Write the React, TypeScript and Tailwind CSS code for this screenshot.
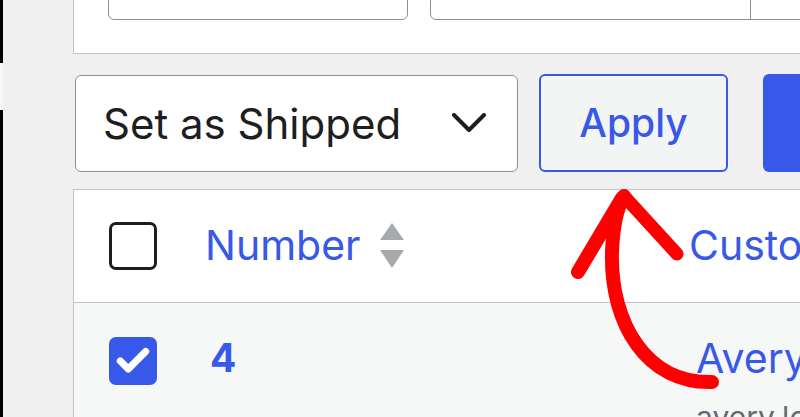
import { Check } from 'lucide-react'

function SortArrows() {
  return (
    <svg width="26" height="46" viewBox="0 0 26 46" className="shrink-0">
      <path d="M13 0 L25 17 L1 17 Z" fill="#a7aaad" />
      <path d="M1 27 L25 27 L13 45 Z" fill="#a7aaad" />
    </svg>
  )
}

function Arrow() {
  return (
    <svg
      className="absolute left-0 top-0 pointer-events-none"
      width="800"
      height="417"
      viewBox="0 0 800 417"
    >
      <g fill="none" stroke="#ff0000" strokeLinecap="round" strokeLinejoin="round">
        <path d="M712 382 C 648 384, 610 325, 612 252 C 613 225, 617 208, 624 196" strokeWidth="14" />
        <path d="M578 272 L 622 198" strokeWidth="14" />
        <path d="M624 196 L 677 254" strokeWidth="13" />
      </g>
    </svg>
  )
}

export default function App() {
  return (
    <div className="relative flex w-[800px] h-[417px] overflow-hidden bg-[#f0f0f1] font-['Inter',sans-serif]">
      <div className="flex flex-col w-[3px] shrink-0">
        <div className="h-[63px] shrink-0 bg-black" />
        <div className="h-[47px] shrink-0 bg-[#f6f7f7]" />
        <div className="flex-1 bg-black" />
      </div>

      <div className="flex flex-col flex-1 pl-[70px] min-w-0">
        {/* filters panel */}
        <div className="flex items-end gap-[22px] shrink-0 -mt-[50px] h-[104px] pl-[34px] pb-[33px] bg-white border-l border-b border-[#c3c4c7]">
          <div className="w-[300px] h-[60px] shrink-0 bg-white border border-[#8c8f94] rounded-[6px]" />
          <div className="flex w-[420px] h-[60px] shrink-0 bg-white border border-[#8c8f94] rounded-[6px]">
            <div className="w-[320px] border-r border-[#8c8f94]" />
          </div>
        </div>

        {/* bulk actions */}
        <div className="flex items-center shrink-0 mt-[20px] pl-[2px]">
          <div className="flex items-center justify-between w-[443px] h-[97px] shrink-0 pl-[27px] pr-[31px] bg-white border border-[#8c8f94] rounded-[6px] text-[42px] text-[#1e1e1e]">
            <span>Set as Shipped</span>
            <svg width="34" height="20" viewBox="0 0 34 20">
              <path d="M2 2 L17 17 L32 2" fill="none" stroke="#1e1e1e" strokeWidth="4" strokeLinecap="round" strokeLinejoin="round" />
            </svg>
          </div>
          <button className="ml-[21px] w-[189px] h-[98px] shrink-0 bg-[#f3f4f4] border-2 border-[#3858e9] rounded-[6px] text-[39px] font-medium text-[#3858e9]">
            Apply
          </button>
          <div className="ml-[35px] w-[200px] h-[98px] shrink-0 bg-[#3858e9] rounded-[6px]" />
        </div>

        {/* orders table */}
        <div className="mt-[17px] shrink-0 bg-white border-l border-t border-[#c3c4c7]">
          <div className="flex items-center h-[113px] border-b border-[#c3c4c7]">
            <div className="w-[131px] shrink-0 pl-[35px]">
              <div className="w-[48px] h-[48px] border-[3px] border-[#1e1e1e] rounded-[7px] bg-white" />
            </div>
            <div className="flex items-center w-[484px] shrink-0 text-[41px] text-[#3858e9]">
              <span>Number</span>
              <span className="ml-[18px]"><SortArrows /></span>
            </div>
            <div className="text-[41px] text-[#3858e9] whitespace-nowrap">Customer</div>
          </div>
          <div className="flex h-[200px] bg-[#f6f7f7]">
            <div className="w-[131px] shrink-0 pl-[35px] pt-[34px]">
              <div className="flex items-center justify-center w-[48px] h-[48px] bg-[#3858e9] rounded-[7px]">
                <Check size={38} color="white" strokeWidth={4.5} />
              </div>
            </div>
            <div className="w-[491px] shrink-0 pl-[5px] pt-[31px] text-[39px] font-bold leading-[48px] text-[#3858e9]">
              4
            </div>
            <div className="pt-[31px] whitespace-nowrap">
              <div className="text-[41px] leading-[48px] text-[#3858e9]">Avery Lopez</div>
              <div className="mt-[13px] text-[30px] text-[#646970]">avery.lopez@example.com</div>
            </div>
          </div>
        </div>
      </div>

      <Arrow />
    </div>
  )
}
